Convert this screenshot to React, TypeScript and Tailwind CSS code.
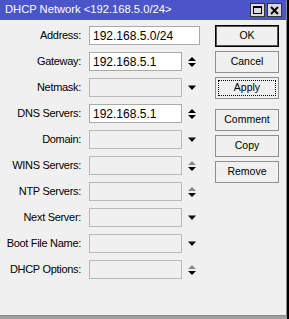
const fields: { label: string; value?: string; kind: 'wide' | 'updown' | 'down' | 'updownOff'; enabled?: boolean }[] = [
  { label: 'Address:', value: '192.168.5.0/24', kind: 'wide', enabled: true },
  { label: 'Gateway:', value: '192.168.5.1', kind: 'updown', enabled: true },
  { label: 'Netmask:', kind: 'down' },
  { label: 'DNS Servers:', value: '192.168.5.1', kind: 'updown', enabled: true },
  { label: 'Domain:', kind: 'down' },
  { label: 'WINS Servers:', kind: 'updownOff' },
  { label: 'NTP Servers:', kind: 'updownOff' },
  { label: 'Next Server:', kind: 'down' },
  { label: 'Boot File Name:', kind: 'down' },
  { label: 'DHCP Options:', kind: 'updownOff' },
];

function UpDown({ off }: { off?: boolean }) {
  return (
    <svg width="10" height="12" viewBox="0 0 10 12">
      <polygon points="1,5 5,1 9,5" fill={off ? '#8a8a8a' : '#000'} />
      <polygon points="1,7 9,7 5,11" fill="#000" />
    </svg>
  );
}

function Down() {
  return (
    <svg width="10" height="6" viewBox="0 0 10 6">
      <polygon points="1,0.5 9,0.5 5,5" fill="#000" />
    </svg>
  );
}

export default function App() {
  return (
    <div className="flex w-[289px] h-[319px] bg-[#a0a0a0]" style={{ fontFamily: '"Liberation Sans", Arial, sans-serif' }}>
      <div className="flex flex-col w-[287px]">
        <div className="flex flex-col h-[316px] bg-[#f0f0f0] border-r border-b border-[#8c8c8c]">
          <div className="flex items-center justify-between h-[20px] bg-[#4b54c8] pl-[5px] pr-[4px]">
            <span className="text-white text-[11.2px] leading-none">DHCP Network &lt;192.168.5.0/24&gt;</span>
            <div className="flex gap-[2px]">
              <div className="flex items-center justify-center w-[15px] h-[14px] bg-[#d9d9d9] border border-[#333]">
                <div className="w-[9px] h-[8px] border border-black border-t-2" />
              </div>
              <div className="flex items-center justify-center w-[15px] h-[14px] bg-[#d9d9d9] border border-[#333]">
                <svg width="9" height="9" viewBox="0 0 9 9">
                  <path d="M1 1 L8 8 M8 1 L1 8" stroke="#000" strokeWidth="2" />
                </svg>
              </div>
            </div>
          </div>

          <div className="flex">
            <div className="flex flex-col gap-[7px] pt-[6px]">
              {fields.map((f) => (
                <div key={f.label} className="flex items-center h-[19px]">
                  <span className="w-[82px] text-right text-[11px] tracking-[-0.3px] text-black pr-px">{f.label}</span>
                  <div
                    className={`ml-[7px] h-[19px] border border-[#a9a9a9] flex items-center pl-[3px] text-[12px] text-black ${
                      f.kind === 'wide' ? 'w-[111px]' : 'w-[93px]'
                    } ${f.enabled ? 'bg-white' : 'bg-[#f0f0f0] border-[#b9b9b9]'}`}
                  >
                    {f.value}
                  </div>
                  {f.kind !== 'wide' && (
                    <div className="w-[18px] flex justify-center pl-[2px]">
                      {f.kind === 'down' ? <Down /> : <UpDown off={f.kind === 'updownOff'} />}
                    </div>
                  )}
                </div>
              ))}
            </div>

            <div className="flex flex-col pt-[5px] ml-[15px] gap-[4px] text-[10.5px] text-black">
              <div className="w-[64px] h-[22px] flex items-center justify-center border border-black bg-[#f0f0f0] shadow-[inset_0_0_0_1px_#555]">OK</div>
              <div className="w-[64px] h-[22px] flex items-center justify-center border border-[#8f8f8f] bg-[#f0f0f0]">Cancel</div>
              <div className="w-[64px] h-[22px] flex items-center justify-center border border-[#8f8f8f] bg-[#f0f0f0] p-[2px]">
                <div className="w-full h-full flex items-center justify-center border border-dotted border-black">Apply</div>
              </div>
              <div className="w-[64px] h-[22px] mt-[6px] flex items-center justify-center border border-[#8f8f8f] bg-[#f0f0f0]">Comment</div>
              <div className="w-[64px] h-[22px] flex items-center justify-center border border-[#8f8f8f] bg-[#f0f0f0]">Copy</div>
              <div className="w-[64px] h-[22px] flex items-center justify-center border border-[#8f8f8f] bg-[#f0f0f0]">Remove</div>
            </div>
          </div>
        </div>
      </div>
      <div className="w-[2px] h-full bg-black" />
    </div>
  );
}
